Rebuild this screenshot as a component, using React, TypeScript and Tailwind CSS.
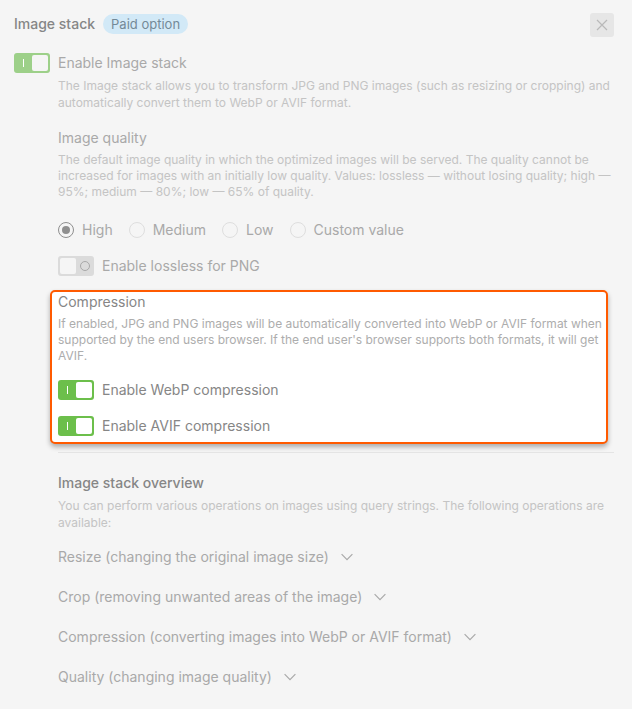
import { useState, type ReactNode } from "react";

const FONT = "font-['Inter','Liberation_Sans',sans-serif]";

type SwitchProps = {
  label: string;
  initial: boolean;
  tone?: "muted" | "strong";
};

function Switch({ label, initial, tone = "muted" }: SwitchProps) {
  const [on, setOn] = useState(initial);
  const strong = tone === "strong";
  const track = on ? (strong ? "bg-[#6cbf4b]" : "bg-[#9dd089]") : "bg-[#dbdbdb]";
  const knob = strong ? "bg-white" : "bg-[#f5f5f5]";
  return (
    <label className="flex h-5 w-fit cursor-pointer items-center gap-2">
      <input
        type="checkbox"
        role="switch"
        className="sr-only"
        checked={on}
        onChange={(e) => setOn(e.target.checked)}
      />
      <span
        className={`flex h-5 w-9 shrink-0 items-center rounded-[3px] p-0.5 ${track} ${on ? "" : "flex-row-reverse"}`}
      >
        <span className={`flex flex-1 items-center justify-center ${on ? "pr-0.5" : "pl-0.5"}`}>
          {on ? (
            <span className="h-2 w-px bg-white" />
          ) : (
            <span className="size-2.5 rounded-full border border-[#a8a8a8]" />
          )}
        </span>
        <span className={`h-4 w-4 rounded-[2px] ${knob}`} />
      </span>
      <span className={strong ? "text-[#868686]" : "text-[#a9a9a9]"}>{label}</span>
    </label>
  );
}

function Radio({ label, checked, onSelect }: { label: string; checked: boolean; onSelect: () => void }) {
  return (
    <label className="flex cursor-pointer items-center gap-2">
      <input
        type="radio"
        name="quality"
        checked={checked}
        onChange={onSelect}
        className="grid size-4 appearance-none place-content-center rounded-full border border-[#dedede] before:size-2 before:rounded-full checked:border-[#8f8f8f] checked:before:bg-[#8f8f8f]"
      />
      {label}
    </label>
  );
}

function Operation({ children }: { children: ReactNode }) {
  return (
    <li>
      <button type="button" className="flex h-5 cursor-pointer items-center gap-3 text-left">
        {children}
        <svg width="12" height="12" viewBox="0 0 12 12" fill="none" stroke="#a9a9a9" strokeWidth="1.2" aria-hidden="true">
          <path d="M0.6 3.2 6 8.6l5.4-5.4" />
        </svg>
      </button>
    </li>
  );
}

const QUALITIES = ["High", "Medium", "Low", "Custom value"];

const OPERATIONS = [
  "Resize (changing the original image size)",
  "Crop (removing unwanted areas of the image)",
  "Compression (converting images into WebP or AVIF format)",
  "Quality (changing image quality)",
];

export default function App() {
  const [quality, setQuality] = useState("High");
  return (
    <main className={`min-h-screen bg-[#f5f5f5] pt-[13px] pr-[18px] pb-5 pl-[14px] text-sm text-[#a9a9a9] ${FONT}`}>
      <header className="flex items-start justify-between">
        <div className="flex items-center gap-2 pt-px">
          <h1 className="font-medium text-[#868686]">Image stack</h1>
          <span className="flex h-5 items-center rounded-full bg-[#d2e9f7] px-2 text-[13px] text-[#748997]">
            Paid option
          </span>
        </div>
        <button
          type="button"
          aria-label="Close"
          className="flex size-6 cursor-pointer items-center justify-center rounded-[3px] bg-[#e6e6e6]"
        >
          <svg width="12" height="12" viewBox="0 0 12 12" fill="none" stroke="#b9b9b9" strokeWidth="1.2" aria-hidden="true">
            <path d="m1 1 10 10M11 1 1 11" />
          </svg>
        </button>
      </header>

      <div className="mt-4">
        <Switch label="Enable Image stack" initial />
      </div>

      <div className="pl-11">
        <p className="mt-1 text-xs leading-[17px] text-[#c4c4c4]">
          The Image stack allows you to transform JPG and PNG images (such as resizing or cropping) and automatically
          convert them to WebP or AVIF format.
        </p>

        <section>
          <h2 className="mt-[17px] text-[#a9a9a9]">Image quality</h2>
          <p className="mt-1 text-xs text-[#c4c4c4]">
            The default image quality in which the optimized images will be served. The quality cannot be increased for
            images with an initially low quality. Values: lossless — without losing quality; high — 95%; medium — 80%;
            low — 65% of quality.
          </p>
          <div role="radiogroup" aria-label="Image quality" className="mt-5 flex flex-wrap gap-4">
            {QUALITIES.map((q) => (
              <Radio key={q} label={q} checked={quality === q} onSelect={() => setQuality(q)} />
            ))}
          </div>
          <div className="mt-4">
            <Switch label="Enable lossless for PNG" initial={false} />
          </div>
        </section>

        <section className="mt-[14px] mr-1.5 -ml-2 rounded-[5px] border-2 border-[#ff5a00] bg-white pr-1 pb-1.5 pl-1.5 shadow-[0_3px_5px_rgba(0,0,0,0.3)]">
          <h2 className="text-[#868686]">Compression</h2>
          <p className="mt-1 text-xs text-[#adadad]">
            If enabled, JPG and PNG images will be automatically converted into WebP or AVIF format when supported by
            the end users browser. If the end user's browser supports both formats, it will get AVIF.
          </p>
          <div className="mt-4 flex flex-col gap-4">
            <Switch label="Enable WebP compression" initial tone="strong" />
            <Switch label="Enable AVIF compression" initial tone="strong" />
          </div>
        </section>

        <hr className="mt-2 border-[#e4e4e4]" />

        <section>
          <h2 className="mt-5 font-medium text-[#868686]">Image stack overview</h2>
          <p className="mt-1 text-xs leading-[17px] text-[#c4c4c4]">
            You can perform various operations on images using query strings. The following operations are available:
          </p>
          <ul className="mt-4 flex flex-col gap-5">
            {OPERATIONS.map((o) => (
              <Operation key={o}>{o}</Operation>
            ))}
          </ul>
        </section>
      </div>
    </main>
  );
}
